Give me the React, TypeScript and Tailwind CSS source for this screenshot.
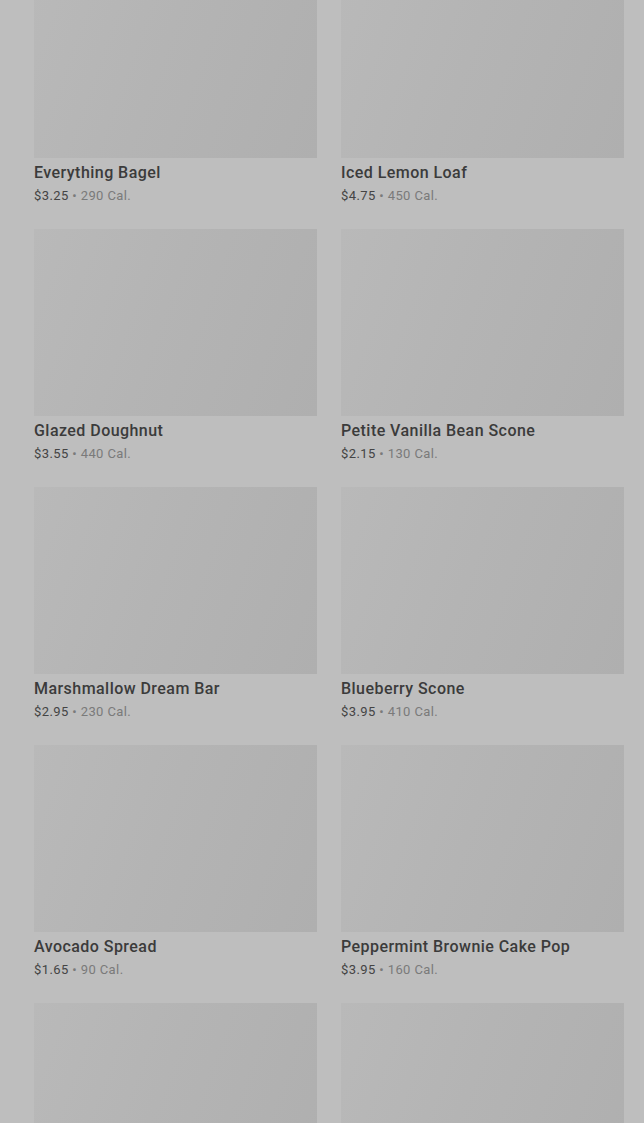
type Item = { name: string; price: string; cal: string };

const items: Item[] = [
  { name: "Everything Bagel", price: "$3.25", cal: "290 Cal." },
  { name: "Iced Lemon Loaf", price: "$4.75", cal: "450 Cal." },
  { name: "Glazed Doughnut", price: "$3.55", cal: "440 Cal." },
  { name: "Petite Vanilla Bean Scone", price: "$2.15", cal: "130 Cal." },
  { name: "Marshmallow Dream Bar", price: "$2.95", cal: "230 Cal." },
  { name: "Blueberry Scone", price: "$3.95", cal: "410 Cal." },
  { name: "Avocado Spread", price: "$1.65", cal: "90 Cal." },
  { name: "Peppermint Brownie Cake Pop", price: "$3.95", cal: "160 Cal." },
];

function ProductImage() {
  return (
    <div className="h-[187px] w-full bg-[linear-gradient(110deg,#b9b9b9_0%,#b4b4b4_45%,#afafaf_100%)]" />
  );
}

function MenuCard({ item }: { item: Item }) {
  return (
    <div className="flex flex-col">
      <ProductImage />
      <h3 className="mt-[3px] text-[16px] leading-6 font-medium text-[#3b3b3b] tracking-[0.45px]">
        {item.name}
      </h3>
      <p className="mt-[2px] text-[13px] leading-[18px] text-[#444] tracking-[0.4px]">
        {item.price}
        <span className="text-[#7a7a7a]"> • {item.cal}</span>
      </p>
    </div>
  );
}

export default function App() {
  return (
    <div
      className="h-[1123px] w-full overflow-hidden bg-[#bebebe]"
      style={{ fontFamily: "Roboto, 'Liberation Sans', sans-serif" }}
    >
      <div className="-mt-[29px] grid grid-cols-2 gap-x-6 gap-y-[24px] pl-[34px] pr-[20px]">
        {items.map((item) => (
          <MenuCard key={item.name} item={item} />
        ))}
        {/* next row, only the pictures are in view */}
        <ProductImage />
        <ProductImage />
      </div>
    </div>
  );
}
